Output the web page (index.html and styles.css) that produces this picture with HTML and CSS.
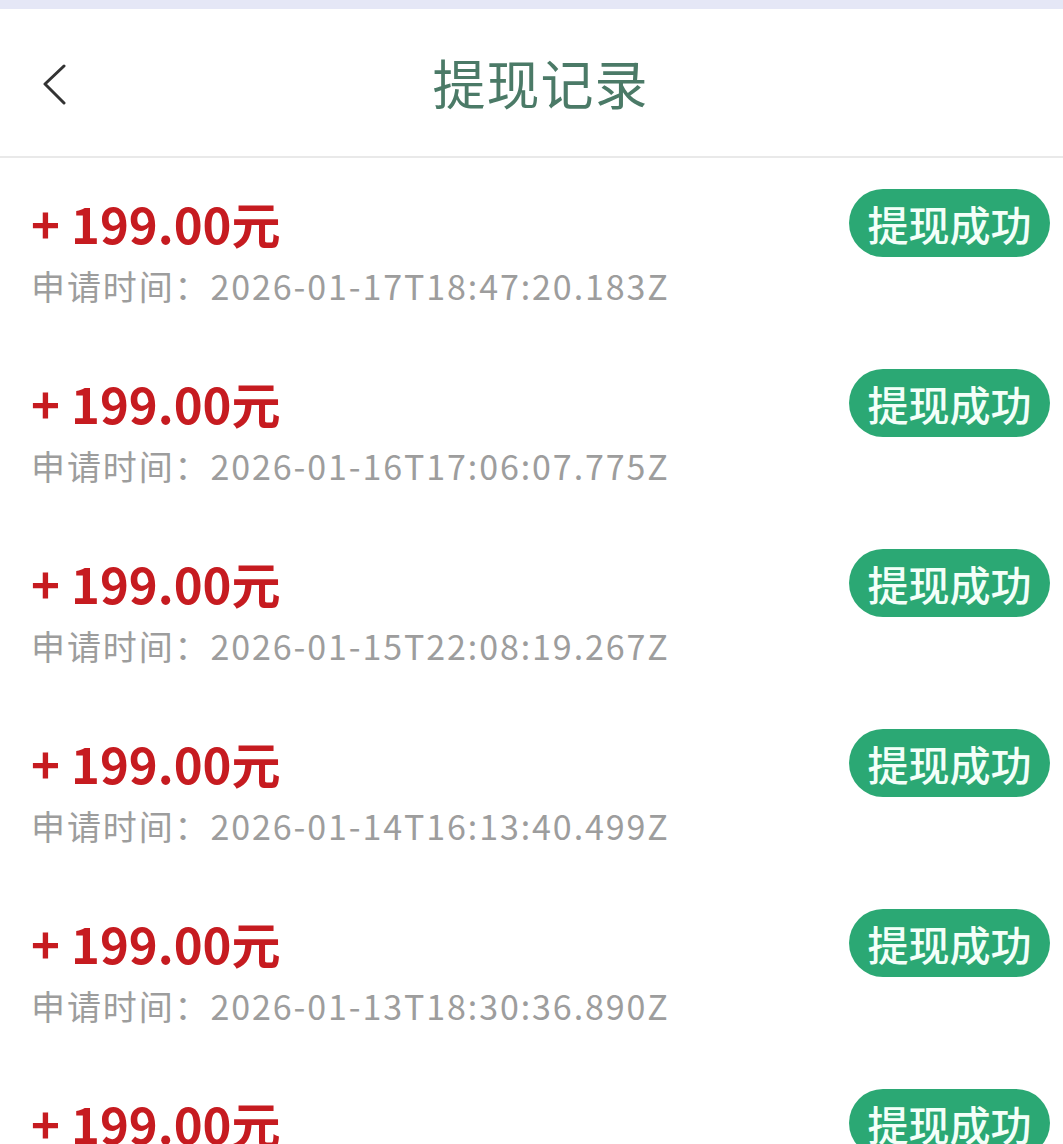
FILE: index.html
```html
<!DOCTYPE html>
<html lang="zh-CN">
<head>
<meta charset="utf-8">
<title>提现记录</title>
<link rel="stylesheet" href="styles.css">
</head>
<body>
<div class="statusbar"></div>
<header class="header">
  <button class="back" aria-label="返回">
    <svg width="24" height="42" viewBox="0 0 24 42"><path d="M21 2 L2 20 L21 39" fill="none" stroke="#333" stroke-width="3" stroke-linecap="round" stroke-linejoin="round"/></svg>
  </button>
  <h1 class="title">提现记录</h1>
</header>
<main class="list">
  <div class="row">
    <div class="info"><div class="amount">+ 199.00元</div><div class="time">申请时间：2026-01-17T18:47:20.183Z</div></div>
    <span class="badge">提现成功</span>
  </div>
  <div class="row">
    <div class="info"><div class="amount">+ 199.00元</div><div class="time">申请时间：2026-01-16T17:06:07.775Z</div></div>
    <span class="badge">提现成功</span>
  </div>
  <div class="row">
    <div class="info"><div class="amount">+ 199.00元</div><div class="time">申请时间：2026-01-15T22:08:19.267Z</div></div>
    <span class="badge">提现成功</span>
  </div>
  <div class="row">
    <div class="info"><div class="amount">+ 199.00元</div><div class="time">申请时间：2026-01-14T16:13:40.499Z</div></div>
    <span class="badge">提现成功</span>
  </div>
  <div class="row">
    <div class="info"><div class="amount">+ 199.00元</div><div class="time">申请时间：2026-01-13T18:30:36.890Z</div></div>
    <span class="badge">提现成功</span>
  </div>
  <div class="row">
    <div class="info"><div class="amount">+ 199.00元</div><div class="time">申请时间：2026-01-12T19:12:05.341Z</div></div>
    <span class="badge">提现成功</span>
  </div>
</main>
</body>
</html>
```
FILE: styles.css
```css
html, body {
  margin: 0;
  padding: 0;
  background: #fff;
  font-family: "Noto Sans CJK SC", "Noto Sans", sans-serif;
  overflow: hidden;
}
.statusbar {
  height: 9px;
  background: #e5e7f6;
}
.header {
  height: 149px;
  border-bottom: 2px solid #e9e9e9;
  display: flex;
  align-items: center;
  justify-content: center;
  position: relative;
  box-sizing: border-box;
}
.back {
  position: absolute;
  left: 43px;
  top: 55px;
  border: 0;
  background: none;
  padding: 0;
  width: 24px;
  height: 42px;
}
.back svg { display: block; }
.title {
  margin: 0;
  font-size: 53px;
  font-weight: 400;
  color: #4b7a67;
  letter-spacing: 1px;
  line-height: 1;
  padding-left: 18px;
}
.list {
  display: flex;
  flex-direction: column;
}
.row {
  height: 180px;
  box-sizing: border-box;
  padding: 31px 13px 0 31px;
  display: flex;
  justify-content: space-between;
  align-items: flex-start;
}
.info {
  display: flex;
  flex-direction: column;
}
.amount {
  height: 68px;
  line-height: 68px;
  font-size: 49px;
  font-weight: 700;
  color: #c61b20;
  letter-spacing: 0;
}
.time {
  margin-top: 9px;
  height: 40px;
  line-height: 40px;
  font-size: 34px;
  color: #9d9d9d;
  letter-spacing: 1.9px;
}
.badge {
  width: 201px;
  height: 68px;
  border-radius: 34px;
  background: #2ba874;
  color: #f3fff8;
  font-size: 41px;
  line-height: 68px;
  text-align: center;
  font-weight: 500;
}
```
